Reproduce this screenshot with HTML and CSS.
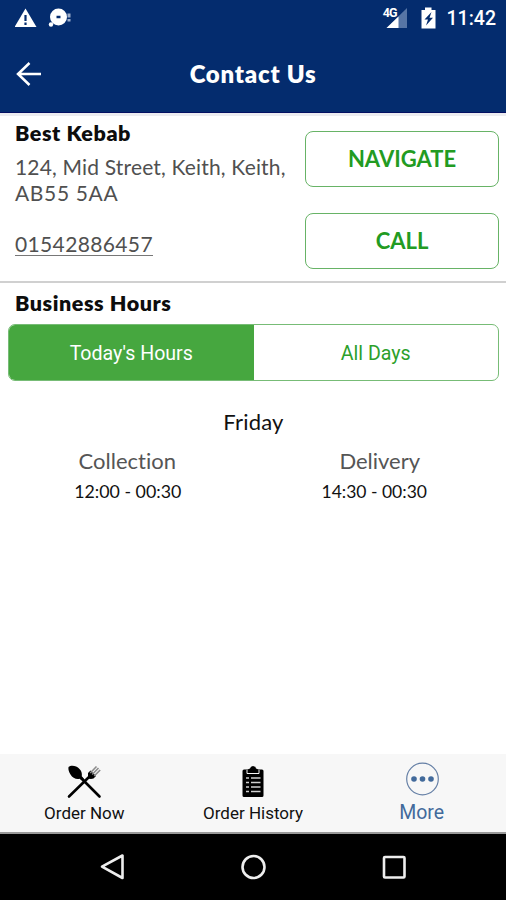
FILE: index.html
```
<!DOCTYPE html>
<html lang="en">
<head>
<meta charset="utf-8">
<title>Contact Us</title>
<link rel="stylesheet" href="styles.css">
</head>
<body>
<header class="top">
  <div class="status">
    <svg class="status-left" width="60" height="36" viewBox="0 0 60 36">
      <path d="M10.500 8.500L21.500 27H-0.500Z" fill="#fff"/>
      <path d="M10.500 15v6M10.500 22.500v2.500" stroke="#042c6e" stroke-width="2.200"/>
      <circle cx="43.500" cy="17" r="8.500" fill="#fff"/>
      <circle cx="36" cy="24.500" r="2.200" fill="#fff"/>
      <path d="M41.500 17h4" stroke="#042c6e" stroke-width="2.500"/>
      <path d="M54 13.500v4M54 19v2.500" stroke="#9badcb" stroke-width="3"/>
    </svg>
    <div class="status-right">
      <span class="network">4G</span>
      <svg class="signal" width="21" height="36" viewBox="0 0 21 36">
        <path d="M21 8v20H0.500Z" fill="#5775a5"/>
        <path d="M12.500 16.500V28H0.500Z" fill="#fff"/>
      </svg>
      <svg class="battery" width="15" height="36" viewBox="0 0 15 36">
        <path d="M4 7.500h6.500V10H14.500V28.500H0.500V10H4Z" fill="#fff"/>
        <path d="M10.500 12L3.500 19.500H7L5 25.500L12 17.800H8.500Z" fill="#042c6e"/>
      </svg>
      <span class="clock">11:42</span>
    </div>
  </div>
  <div class="bar">
    <svg class="back" width="28" height="28" viewBox="0 0 28 28">
      <path d="M26 14H3M14.500 3L3 14l11.500 11" fill="none" stroke="#fff" stroke-width="2.500"/>
    </svg>
    <h1 class="title">Contact Us</h1>
  </div>
</header>
<main>
  <section class="contact">
    <div class="details">
      <h2 class="heading">Best Kebab</h2>
      <p class="address">124, Mid Street, Keith, Keith,<br><span class="postcode">AB55 5AA</span></p>
      <a class="phone">01542886457</a>
    </div>
    <div class="actions">
      <button class="action">NAVIGATE</button>
      <button class="action">CALL</button>
    </div>
  </section>
  <section class="hours">
    <h2 class="heading business">Business Hours</h2>
    <div class="tabs">
      <div class="tab active">Today's Hours</div>
      <div class="tab">All Days</div>
    </div>
    <p class="day">Friday</p>
    <div class="slots">
      <div class="slot"><p class="kind">Collection</p><p class="time">12:00 - 00:30</p></div>
      <div class="slot second"><p class="kind">Delivery</p><p class="time">14:30 - 00:30</p></div>
    </div>
  </section>
</main>
<nav class="menu">
  <div class="item">
    <svg width="36" height="36" viewBox="0 0 36 36">
      <path d="M2.500 4C5 2 10.500 2.500 13.500 6c2.500 2.500 2.500 5 2.300 7.200L18.500 16.500l-1.500 1.500-3.500-2.200C10 16.500 6.500 15 4.500 11.500 3 9 2 6.500 2.500 4Z"/>
      <path d="M15.500 15.500L33.500 33.500M23 14L3 33.500" fill="none" stroke="#000" stroke-width="2.600" stroke-linecap="round"/>
      <path d="M22 10l2.500-2.500 5.500 5.500-2.500 2.500q-3.500 1-5.500-.5z"/>
      <path d="M24.200 10l6.300-6.500M26.200 11.500l6.300-6.500M28.200 13l6-6" fill="none" stroke="#8c8c8c" stroke-width="1.600"/>
    </svg>
    <span class="label">Order Now</span>
  </div>
  <div class="item">
    <svg width="36" height="36" viewBox="0 0 36 36">
      <path d="M9 6.500h3.500l2.500-1Q15.500 3 18 3t3 2.500l2.500 1H27q1.500 0 1.500 1.500V32.500q0 1.500-1.500 1.500H9q-1.500 0-1.500-1.500V8Q7.500 6.500 9 6.500Z"/>
      <path d="M12 7v3.500h12V7" fill="none" stroke="#f7f7f7" stroke-width="1"/>
      <path d="M11 15h3M16 15h9.500M11 19.500h3M16 19.500h9.500M11 24h3M16 24h9.500M11 28.500h3M16 28.500h9.500" stroke="#d0d0d0" stroke-width="1.600"/>
    </svg>
    <span class="label">Order History</span>
  </div>
  <div class="item current">
    <svg width="36" height="36" viewBox="0 0 36 36">
      <circle cx="18.500" cy="18" r="15.800" fill="none" stroke="#6680a6" stroke-width="1.200"/>
      <circle cx="10" cy="18" r="2.800" fill="#426a9b"/><circle cx="18.500" cy="18" r="2.800" fill="#426a9b"/><circle cx="27" cy="18" r="2.800" fill="#426a9b"/>
    </svg>
    <span class="label more">More</span>
  </div>
</nav>
<footer class="system">
  <svg width="30" height="30" viewBox="0 0 30 30"><path d="M25.500 3.500v22.500L5 14.700Z"/></svg>
  <svg width="30" height="30" viewBox="0 0 30 30"><circle cx="15.500" cy="15" r="11"/></svg>
  <svg width="30" height="30" viewBox="0 0 30 30"><rect x="5" y="5" width="20.500" height="20.500" rx="1"/></svg>
</footer>
</body>
</html>
```
FILE: styles.css
```
* { box-sizing: border-box; }
body {
  margin: 0;
  width: 506px;
  height: 900px;
  display: flex;
  flex-direction: column;
  background: #fff;
  color: #111;
  font-family: Lato, sans-serif;
  font-variant-ligatures: none;
  overflow: hidden;
}
h1, h2, p { margin: 0; }
svg { display: block; flex: none; }
span, a, h1, h2, p { white-space: nowrap; }

.top { height: 113px; background: #042c6e; border-bottom: 1px solid #030f62; color: #fff; }
.status { height: 36px; display: flex; justify-content: space-between; padding: 0 10px 0 15px; }
.status-right { display: flex; align-items: flex-start; }
.network { font: 700 12.500px/14px Roboto, sans-serif; margin: 6px -12px 0 0; letter-spacing: -1px; z-index: 1; }
.signal { margin-left: 1px; }
.battery { margin-left: 14px; }
.clock { font: 500 19.500px/38px Roboto, sans-serif; margin-left: 11px; }
.bar { height: 76px; display: grid; grid-template-columns: 60px 1fr 60px; align-items: center; }
.back { margin: 0 0 0 15px; }
.title { font-size: 24px; line-height: 30px; font-weight: 800; letter-spacing: 0.75px; text-align: center; }

.contact { height: 170px; display: flex; justify-content: space-between; border-top: 3px solid #ececf0; border-bottom: 2px solid #d0d0d0; padding: 0 7px 0 15px; }
.details { padding-top: 4px; }
.heading { font-size: 21.500px; line-height: 26px; font-weight: 800; letter-spacing: 0.55px; color: #0d0d0d; }
.address { font-size: 21px; line-height: 26px; font-weight: 400; letter-spacing: 0.17px; color: #505050; margin-top: 8px; }
.postcode { letter-spacing: 0.65px; }
.phone { display: inline-block; font-size: 21px; line-height: 24px; letter-spacing: 0.36px; color: #505050; border-bottom: 1px solid #777; margin-top: 26px; height: 24px; }
.actions { width: 194px; padding-top: 15px; display: flex; flex-direction: column; gap: 26px; }
.action { height: 56px; padding: 0 0 1px; border: 1px solid #67b366; border-radius: 8px; background: #fff; color: #229b22; font: 700 22px/28px Lato, sans-serif; }

.hours { padding: 7px 7px 0 8px; }
.business { padding-left: 7px; }
.tabs { height: 57px; margin-top: 8px; display: flex; border: 1px solid #77bc76; border-radius: 7px; overflow: hidden; }
.tab { flex: 1; display: flex; align-items: center; justify-content: center; font: 400 19.600px/28px Roboto, sans-serif; color: #2ca02b; padding-top: 3px; }
.active { background: #46a73f; color: #fff; }
.day { font-size: 22px; line-height: 28px; letter-spacing: 0.2px; text-align: center; margin-top: 27px; }
.slots { display: grid; grid-template-columns: 1fr 1fr; margin-top: 12px; }
.slot { text-align: center; padding-right: 7px; }
.second { padding: 0 0 0 7px; }
.kind { font-size: 22px; line-height: 26px; color: #555; }
.time { font-size: 17.800px; line-height: 24px; margin-top: 5px; padding-left: 1px; }
.second .time { font-size: 17.500px; line-height: 25px; padding: 0 11px 0 0; }

.menu { margin-top: auto; height: 80px; background: #f7f7f7; border-bottom: 2px solid #999; display: grid; grid-template-columns: repeat(3, 1fr); }
.item { display: flex; flex-direction: column; align-items: center; padding-top: 9px; }
.label { font: 400 17px/24px Roboto, sans-serif; color: #111; margin-top: 2px; }
.current { padding-top: 7px; }
.more { font-size: 19.500px; color: #426a9b; margin-top: 4px; }
.system { height: 66px; background: #000; display: flex; justify-content: center; gap: 111px; padding-top: 18px; }
.system svg { fill: none; stroke: #eee; stroke-width: 2.600; stroke-linejoin: round; }
```
